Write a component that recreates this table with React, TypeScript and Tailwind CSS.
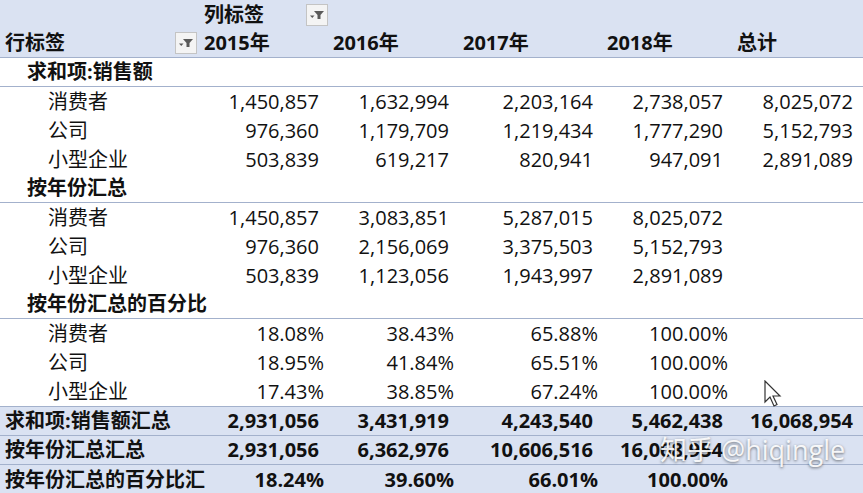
const cols = "grid grid-cols-[200px_129px_130px_144px_130px_130px]";

type Row = {
  label: string;
  values: string[];
  pct?: boolean;
};

const groups: { title: string; pct?: boolean; rows: Row[] }[] = [
  {
    title: "求和项:销售额",
    rows: [
      { label: "消费者", values: ["1,450,857", "1,632,994", "2,203,164", "2,738,057", "8,025,072"] },
      { label: "公司", values: ["976,360", "1,179,709", "1,219,434", "1,777,290", "5,152,793"] },
      { label: "小型企业", values: ["503,839", "619,217", "820,941", "947,091", "2,891,089"] },
    ],
  },
  {
    title: "按年份汇总",
    rows: [
      { label: "消费者", values: ["1,450,857", "3,083,851", "5,287,015", "8,025,072", ""] },
      { label: "公司", values: ["976,360", "2,156,069", "3,375,503", "5,152,793", ""] },
      { label: "小型企业", values: ["503,839", "1,123,056", "1,943,997", "2,891,089", ""] },
    ],
  },
  {
    title: "按年份汇总的百分比",
    pct: true,
    rows: [
      { label: "消费者", values: ["18.08%", "38.43%", "65.88%", "100.00%", ""] },
      { label: "公司", values: ["18.95%", "41.84%", "65.51%", "100.00%", ""] },
      { label: "小型企业", values: ["17.43%", "38.85%", "67.24%", "100.00%", ""] },
    ],
  },
];

const totals: Row[] = [
  { label: "求和项:销售额汇总", values: ["2,931,056", "3,431,919", "4,243,540", "5,462,438", "16,068,954"] },
  { label: "按年份汇总汇总", values: ["2,931,056", "6,362,976", "10,606,516", "16,068,954", ""] },
  { label: "按年份汇总的百分比汇", values: ["18.24%", "39.60%", "66.01%", "100.00%", ""], pct: true },
];

function FilterButton() {
  return (
    <div className="w-[22px] h-[22px] bg-[#f4f4f4] border border-[#c4c4c4] flex items-center justify-center">
      <svg width="16" height="12" viewBox="0 0 16 12">
        <path d="M5 2 H15 L11.5 6 V10 H8.5 V6 Z" fill="#5a5a5a" />
        <path d="M1 6.5 H5.5 L3.25 9 Z" fill="#5a5a5a" />
      </svg>
    </div>
  );
}

function ValueCells({ values, pct, bold }: { values: string[]; pct?: boolean; bold?: boolean }) {
  return (
    <>
      {values.map((v, i) => (
        <div
          key={i}
          className={`flex items-center justify-end whitespace-nowrap ${pct ? "pr-[5px]" : "pr-[10px]"} ${bold ? "font-bold" : ""}`}
        >
          {v}
        </div>
      ))}
    </>
  );
}

export default function App() {
  return (
    <div
      className="relative w-[863px] h-[493px] overflow-hidden bg-white text-[20px] leading-none text-[#111]"
      style={{ fontFamily: '"Open Sans", "Noto Sans CJK SC", sans-serif' }}
    >
      {/* header band */}
      <div className="bg-[#dae2f2] border-b border-[#a3b1cc]">
        <div className={`${cols} h-[29px]`}>
          <div />
          <div className="flex items-center justify-between pl-[4px] pr-px font-bold">
            <span>列标签</span>
            <FilterButton />
          </div>
        </div>
        <div className={`${cols} h-[28px] font-bold`}>
          <div className="flex items-center justify-between pl-[5px] pr-[3px]">
            <span>行标签</span>
            <FilterButton />
          </div>
          {["2015年", "2016年", "2017年", "2018年", "总计"].map((h) => (
            <div key={h} className="flex items-center pl-[4px]">
              {h}
            </div>
          ))}
        </div>
      </div>

      {/* body groups */}
      {groups.map((g) => (
        <div key={g.title}>
          <div className={`${cols} h-[29px] border-b border-[#a3b1cc]`}>
            <div className="flex items-center pl-[27px] font-bold whitespace-nowrap">{g.title}</div>
          </div>
          {g.rows.map((r, i) => (
            <div key={i} className={`${cols} h-[29px]`}>
              <div className="flex items-center pl-[48px]">{r.label}</div>
              <ValueCells values={r.values} pct={g.pct} />
            </div>
          ))}
        </div>
      ))}

      {/* grand totals */}
      <div className="bg-[#dae2f2] border-t border-[#a3b1cc]">
        {totals.map((r, i) => (
          <div
            key={i}
            className={`${cols} h-[29px] font-bold ${i < totals.length - 1 ? "border-b border-[#a3b1cc]" : ""}`}
          >
            <div className="flex items-center pl-[5px] whitespace-nowrap">{r.label}</div>
            <ValueCells values={r.values} pct={r.pct} bold />
          </div>
        ))}
      </div>

      {/* mouse cursor */}
      <svg className="absolute left-[764px] top-[380px]" width="20" height="28" viewBox="0 0 20 28">
        <path d="M1 1 V22 L6 17 L10 26 L13 24.5 L9 16 H16 Z" fill="#fff" stroke="#333" strokeWidth="1.2" />
      </svg>

      {/* watermark */}
      <div
        className="absolute left-[660px] top-[436px] text-[27px] text-white/90 whitespace-nowrap"
        style={{ textShadow: "0 1px 3px rgba(0,0,0,0.55)" }}
      >
        知乎 @hiqingle
      </div>
    </div>
  );
}
